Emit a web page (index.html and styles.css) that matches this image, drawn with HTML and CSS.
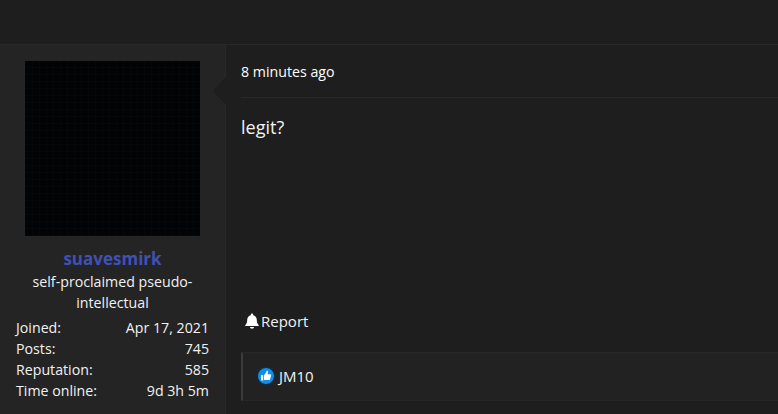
FILE: index.html
```html
<!DOCTYPE html>
<html lang="en">
<head>
    <meta charset="UTF-8">
    <title>Post</title>
    <link rel="stylesheet" href="styles.css">
</head>
<body>
    <div class="top-bar"></div>
    <div class="post">
        <div class="author">
            <div class="avatar"></div>
            <div class="author-name">suavesmirk</div>
            <div class="author-title">self-proclaimed pseudo-intellectual</div>
            <div class="stat"><span>Joined:</span><span>Apr 17, 2021</span></div>
            <div class="stat"><span>Posts:</span><span>745</span></div>
            <div class="stat"><span>Reputation:</span><span>585</span></div>
            <div class="stat"><span>Time online:</span><span>9d 3h 5m</span></div>
        </div>
        <div class="message">
            <div class="message-arrow"></div>
            <div class="message-date">8 minutes ago</div>
            <div class="message-body">legit?</div>
            <div class="message-actions">
                <svg class="bell" viewBox="0 0 16 16" width="16" height="16">
                    <path fill="#fff" d="M8 0.6c-.7 0-1.2.5-1.2 1.2v.5C4.600 2.800 3.200 4.700 3.200 7c0 2.700-.7 3.900-2 5.200-.3.300-.1.900.4.900h12.800c.5 0 .7-.6.400-.9-1.300-1.300-2-2.500-2-5.200 0-2.300-1.400-4.200-3.600-4.700v-.5c0-.7-.5-1.200-1.200-1.200z"/>
                    <path fill="#fff" d="M6 14h4c0 1-.9 1.700-2 1.700S6 15 6 14z"/>
                </svg>
                <span>Report</span>
            </div>
            <div class="likes">
                <svg class="like-icon" viewBox="0 0 18 18" width="18" height="18">
                    <circle cx="9" cy="9" r="8.500" fill="#0f8fe8" stroke="#0a2a44"/>
                    <path fill="#fff" d="M4 8.200h2.200v5.300H4z"/>
                    <path fill="#fff" d="M7 8.200l2.200-2.600c.2-.6.300-1.200.4-1.800.9-.2 1.500.5 1.400 1.500l-.4 1.900h2.500c.8 0 1.200.7 1 1.300l-1 3.700c-.2.600-.6.900-1.200.9H8.200c-.5 0-.9-.2-1.200-.4z"/>
                </svg>
                <span>JM10</span>
            </div>
        </div>
    </div>
</body>
</html>
```
FILE: styles.css
```css
* {
    margin: 0;
    padding: 0;
    box-sizing: border-box;
}

body {
    font-family: 'Open Sans', 'Noto Sans', sans-serif;
    background: #1e1e1e;
    color: #f2f2f2;
    font-size: 14.2px;
    height: 414px;
    overflow: hidden;
}

.top-bar {
    height: 45px;
    background: #1e1e1e;
    border-bottom: 1px solid #282828;
}

.post {
    display: flex;
    height: 369px;
}

.author {
    width: 226px;
    flex-shrink: 0;
    background: #242424;
    border-right: 1px solid #282828;
    padding: 16px 16px 0;
}

.avatar {
    width: 175px;
    height: 175px;
    margin: 0 auto 11px 9px;
    background-color: #020304;
    background-image:
        repeating-linear-gradient(90deg, rgba(10, 25, 30, 0.2) 0 1px, transparent 1px 7px),
        repeating-linear-gradient(0deg, rgba(10, 25, 30, 0.2) 0 1px, transparent 1px 7px);
}

.author-name {
    color: #3f51b5;
    font-size: 17px;
    font-weight: 700;
    line-height: 24px;
    text-align: center;
}

.author-title {
    line-height: 21px;
    text-align: center;
    padding: 0 10px;
    margin-bottom: 4px;
}

.stat {
    display: flex;
    justify-content: space-between;
    line-height: 21px;
}

.message {
    flex: 1;
    position: relative;
    padding: 0 0 0 15px;
}

.message-arrow {
    position: absolute;
    left: -13px;
    top: 32px;
    width: 0;
    height: 0;
    border-style: solid;
    border-width: 14px 13px 14px 0;
    border-color: transparent #1e1e1e transparent transparent;
}

.message-date {
    height: 53px;
    line-height: 53px;
    color: #fff;
    border-bottom: 1px solid #282828;
}

.message-body {
    height: 198px;
    padding-top: 16px;
    font-size: 18px;
    line-height: 26px;
}

.message-actions {
    display: flex;
    align-items: center;
    gap: 1px;
    height: 48px;
    padding-left: 3px;
    margin-top: 1px;
    font-size: 15px;
}

.likes {
    display: flex;
    align-items: center;
    gap: 4px;
    height: 49px;
    padding: 0 0 2px 14px;
    margin-top: 7px;
    background: #222;
    border: 1px solid #272727;
    border-left: 2px solid #3c3c3c;
    border-right: 0;
    font-size: 15px;
}
```
